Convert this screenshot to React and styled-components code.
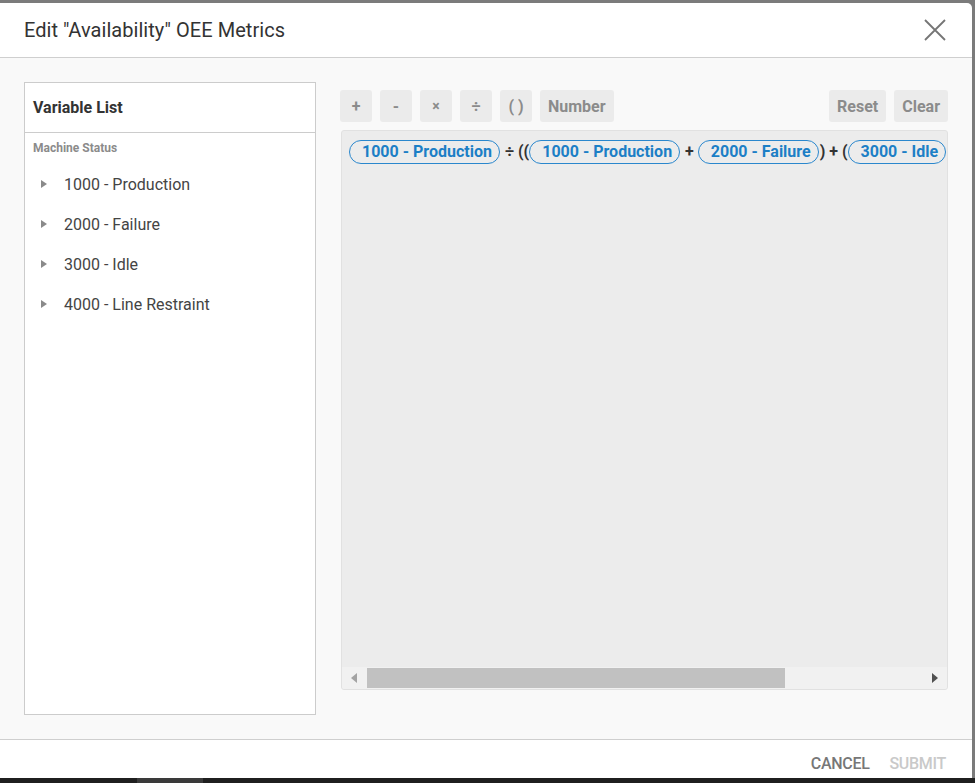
import React from "react";
import styled, { createGlobalStyle } from "styled-components";

const Global = createGlobalStyle`
  html, body { margin: 0; padding: 0; }
  body {
    width: 975px; height: 783px; overflow: hidden;
    background: #7b7b7b;
    font-family: Roboto, "Noto Sans", "Liberation Sans", sans-serif;
  }
`;

const Backdrop = styled.div`
  width: 975px; height: 783px;
  display: flex; flex-direction: column;
`;

const Dialog = styled.div`
  margin-top: 3px;
  width: 972px;
  height: 775px;
  background: #fff;
  border-top-right-radius: 5px;
  display: flex; flex-direction: column;
  overflow: hidden;
`;

const Taskbar = styled.div`
  flex: 1;
  background: #1f1f1f;
  display: flex;
  padding-left: 137px;
`;

const TaskItem = styled.div`
  width: 66px; background: #3a3a3a;
`;

const Header = styled.div`
  height: 55px;
  flex: none;
  border-bottom: 1px solid #cfcfcf;
  display: flex; align-items: center; justify-content: space-between;
  padding: 0 24px 0 24px;
  box-sizing: border-box;
`;

const Title = styled.h2`
  margin: 0;
  font-size: 20px; font-weight: 400; color: #333;
  letter-spacing: 0.05px;
`;

const CloseButton = styled.button`
  border: 0; background: none; padding: 0; margin-right: 1px;
  width: 24px; height: 24px; display: flex; align-items: center; justify-content: center;
  cursor: pointer;
`;

const Body = styled.div`
  flex: 1;
  min-height: 0;
  background: #f9f9f9;
  border-bottom: 1px solid #cfcfcf;
  display: flex;
  gap: 24px;
  padding: 24px;
  box-sizing: border-box;
`;

const VarPanel = styled.div`
  width: 292px;
  flex: none;
  background: #fff;
  border: 1px solid #cccccc;
  box-sizing: border-box;
  display: flex; flex-direction: column;
`;

const PanelHeader = styled.div`
  height: 49px;
  border-bottom: 1px solid #cccccc;
  display: flex; align-items: center;
  padding-left: 8px;
  font-size: 16px; font-weight: 700; color: #333;
`;

const GroupLabel = styled.div`
  font-size: 12px; font-weight: 700; color: #8b8b8b;
  padding: 8px 0 0 8px;
  height: 20px;
`;

const VarList = styled.ul`
  list-style: none; margin: 0; padding: 3px 0 0 0;
`;

const VarItem = styled.li`
  height: 40px;
  display: flex; align-items: center;
  padding-left: 16px;
  font-size: 16px; color: #444;
`;

const Caret = styled.span`
  width: 0; height: 0;
  border-top: 4px solid transparent;
  border-bottom: 4px solid transparent;
  border-left: 6px solid #8a8a8a;
  margin-right: 17px;
`;

const Editor = styled.div`
  flex: 1;
  min-width: 0;
  display: flex; flex-direction: column;
  padding-top: 8px;
  padding-bottom: 25px;
  gap: 8px;
`;

const Toolbar = styled.div`
  display: flex; gap: 8px;
`;

const Spacer = styled.div`flex: 1;`;

const ToolButton = styled.button`
  height: 32px;
  min-width: 32px;
  padding: 0 ${p => (p.$wide ? "8px" : "0")};
  border: 0;
  border-radius: 3px;
  background: #ebebeb;
  color: #8b8b8b;
  font-family: inherit;
  font-size: ${p => (p.$small ? "14px" : "16px")};
  font-weight: 700;
  display: flex; align-items: center; justify-content: center;
`;

const FormulaBox = styled.div`
  flex: 1;
  min-width: 0;
  margin-left: 1px;
  background: #ececec;
  border: 1px solid #e1e1e1;
  border-radius: 3px;
  display: flex; flex-direction: column;
  overflow: hidden;
`;

const FormulaRow = styled.div`
  flex: 1;
  min-width: 0;
  overflow: hidden;
  white-space: nowrap;
  display: flex; align-items: flex-start;
  padding: 9px 7px;
`;

const Chip = styled.span`
  flex: none;
  height: 24px;
  box-sizing: border-box;
  border: 1px solid #2a87cd;
  border-radius: 12px;
  padding: 0 7px 0 12px;
  color: #1c7fc6;
  font-size: 16px; font-weight: 700;
  line-height: 22px;
`;

const Op = styled.span`
  flex: none;
  font-size: 16px; font-weight: 700; color: #333;
  line-height: 24px;
  padding: 0 ${p => p.$r ?? 0}px 0 ${p => p.$l ?? 0}px;
`;

const Scrollbar = styled.div`
  height: 22px;
  flex: none;
  background: #f1f1f1;
  display: flex; align-items: center;
`;

const ScrollArrow = styled.div`
  width: 24px; height: 22px;
  flex: none;
  display: flex; align-items: center; justify-content: center;
`;

const ArrowTri = styled.span`
  width: 0; height: 0;
  border-top: 5px solid transparent;
  border-bottom: 5px solid transparent;
  ${p => (p.$dir === "left"
    ? `border-right: 6px solid ${p.$dim ? "#a3a3a3" : "#505050"};`
    : `border-left: 6px solid ${p.$dim ? "#a3a3a3" : "#505050"};`)}
`;

const Track = styled.div`
  flex: 1; height: 20px; display: flex; padding-left: 1px;
`;

const Thumb = styled.div`
  height: 20px;
  background: #c1c1c1;
`;

const Footer = styled.div`
  height: 38px;
  flex: none;
  display: flex; align-items: center; justify-content: flex-end;
  gap: 20px;
  padding-right: 26px;
  padding-top: 8px;
  box-sizing: border-box;
`;

const FooterButton = styled.button`
  border: 0; background: none; padding: 0;
  font-family: inherit;
  font-size: 16px; font-weight: 500;
  letter-spacing: -0.3px;
  color: ${p => (p.$disabled ? "#c9c9c9" : "#777")};
  text-transform: uppercase;
`;

const variables = ["1000 - Production", "2000 - Failure", "3000 - Idle", "4000 - Line Restraint"];

export default function App() {
  return (
    <>
      <Global />
      <Backdrop>
        <Dialog>
          <Header>
            <Title>Edit "Availability" OEE Metrics</Title>
            <CloseButton aria-label="close">
              <svg width="22" height="22" viewBox="0 0 22 22">
                <path d="M1 1 L21 21 M21 1 L1 21" stroke="#757575" strokeWidth="1.8" fill="none" />
              </svg>
            </CloseButton>
          </Header>
          <Body>
            <VarPanel>
              <PanelHeader>Variable List</PanelHeader>
              <GroupLabel>Machine Status</GroupLabel>
              <VarList>
                {variables.map(v => (
                  <VarItem key={v}><Caret />{v}</VarItem>
                ))}
              </VarList>
            </VarPanel>
            <Editor>
              <Toolbar>
                <ToolButton>+</ToolButton>
                <ToolButton>-</ToolButton>
                <ToolButton $small>×</ToolButton>
                <ToolButton>÷</ToolButton>
                <ToolButton>( )</ToolButton>
                <ToolButton $wide>Number</ToolButton>
                <Spacer />
                <ToolButton $wide>Reset</ToolButton>
                <ToolButton $wide>Clear</ToolButton>
              </Toolbar>
              <FormulaBox>
                <FormulaRow>
                  <Chip>1000 - Production</Chip>
                  <Op $l={5}>÷ ((</Op>
                  <Chip>1000 - Production</Chip>
                  <Op $l={5} $r={4}>+</Op>
                  <Chip>2000 - Failure</Chip>
                  <Op $l={1}>) + (</Op>
                  <Chip>3000 - Idle</Chip>
                  <Op $l={4}>)</Op>
                </FormulaRow>
                <Scrollbar>
                  <ScrollArrow><ArrowTri $dir="left" $dim /></ScrollArrow>
                  <Track><Thumb style={{ width: "418px" }} /></Track>
                  <ScrollArrow><ArrowTri $dir="right" /></ScrollArrow>
                </Scrollbar>
              </FormulaBox>
            </Editor>
          </Body>
          <Footer>
            <FooterButton>Cancel</FooterButton>
            <FooterButton $disabled>Submit</FooterButton>
          </Footer>
        </Dialog>
        <Taskbar><TaskItem /></Taskbar>
      </Backdrop>
    </>
  );
}
